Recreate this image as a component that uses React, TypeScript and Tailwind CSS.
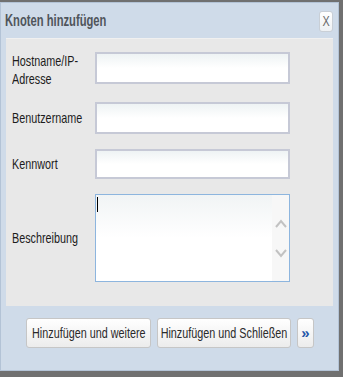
import React from "react";

const font = { fontFamily: '"Liberation Sans", Arial, sans-serif' };

function N({ children, center, s = "l" }: { children: React.ReactNode; center?: boolean; s?: string }) {
  return (
    <span className={`inline-block whitespace-nowrap ${s === "t" ? "scale-x-[0.7]" : "scale-x-[0.72]"} ${center ? "origin-center" : "origin-left"}`}>
      {children}
    </span>
  );
}

function TextInput({ className }: { className: string }) {
  return (
    <div className={`w-[195px] border-2 border-[#c6c9d6] bg-gradient-to-b from-[#eef3f4] via-white to-white ${className}`} />
  );
}

export default function App() {
  return (
    <div className="w-[343px] h-[377px] bg-[#707070] pt-[2px] overflow-hidden" style={font}>
      <div className="w-[339px] h-[369px] bg-[#cfdbe9] border border-[#b3c3d6] flex flex-col">
        {/* Title bar */}
        <div className="h-[35px] flex items-center justify-between pl-[4px] pr-[5px]">
          <span className="text-[16px] font-bold text-[#50555b]"><N s="t">Knoten hinzufügen</N></span>
          <div className="w-[14px] h-[21px] mt-[1px] rounded-[3px] border border-[#c9cfd6] bg-gradient-to-b from-white to-[#eef1f4] flex items-center justify-center text-[15px] text-[#6a6a6a]">
            <N center>X</N>
          </div>
        </div>
        {/* Panel */}
        <div className="mx-[5px] h-[268px] bg-[#e8e8e8] border-t border-[#f0f0f0] pl-[6px] pt-[13px] text-[15px] text-[#1c1c1c]">
          <div className="flex items-start h-[32px]">
            <div className="w-[83px] leading-[18px]"><N>Hostname/IP-</N><br /><N>Adresse</N></div>
            <TextInput className="h-[32px]" />
          </div>
          <div className="flex items-center mt-[18px]">
            <div className="w-[83px]"><N>Benutzername</N></div>
            <TextInput className="h-[32px]" />
          </div>
          <div className="flex items-center mt-[15px]">
            <div className="w-[83px]"><N>Kennwort</N></div>
            <TextInput className="h-[30px]" />
          </div>
          <div className="flex items-center mt-[15px]">
            <div className="w-[83px]"><N>Beschreibung</N></div>
            <div className="w-[195px] h-[88px] border border-[#8db5de] bg-white flex">
              <div className="flex-1 relative bg-gradient-to-b from-[#f1f4f5] to-white via-white">
                <div className="absolute left-[1px] top-[2px] w-[1px] h-[15px] bg-black" />
              </div>
              <div className="w-[17px] bg-[#f7f7f7] flex flex-col items-center pt-[24px] gap-[21px]">
                <svg width="12" height="9" viewBox="0 0 12 9"><path d="M1 8 L6 2 L11 8" fill="none" stroke="#c2c2c2" strokeWidth="2" /></svg>
                <svg width="12" height="9" viewBox="0 0 12 9"><path d="M1 1 L6 7 L11 1" fill="none" stroke="#c2c2c2" strokeWidth="2" /></svg>
              </div>
            </div>
          </div>
        </div>
        {/* Buttons */}
        <div className="flex pl-[25px] pt-[12px] gap-[6px] text-[15px] text-[#2a2a2a]">
          <div className="w-[125px] h-[30px] rounded-[3px] border border-[#c6c6c6] bg-gradient-to-b from-white to-[#ececec] flex items-center justify-center"><N center>Hinzufügen und weitere</N></div>
          <div className="w-[134px] h-[30px] rounded-[3px] border border-[#c6c6c6] bg-gradient-to-b from-white to-[#ececec] flex items-center justify-center"><N center>Hinzufügen und Schließen</N></div>
          <div className="w-[17px] h-[30px] rounded-[3px] border border-[#c6c6c6] bg-gradient-to-b from-white to-[#ececec] flex items-center justify-center text-[#2455a8] font-bold">»</div>
        </div>
      </div>
    </div>
  );
}
